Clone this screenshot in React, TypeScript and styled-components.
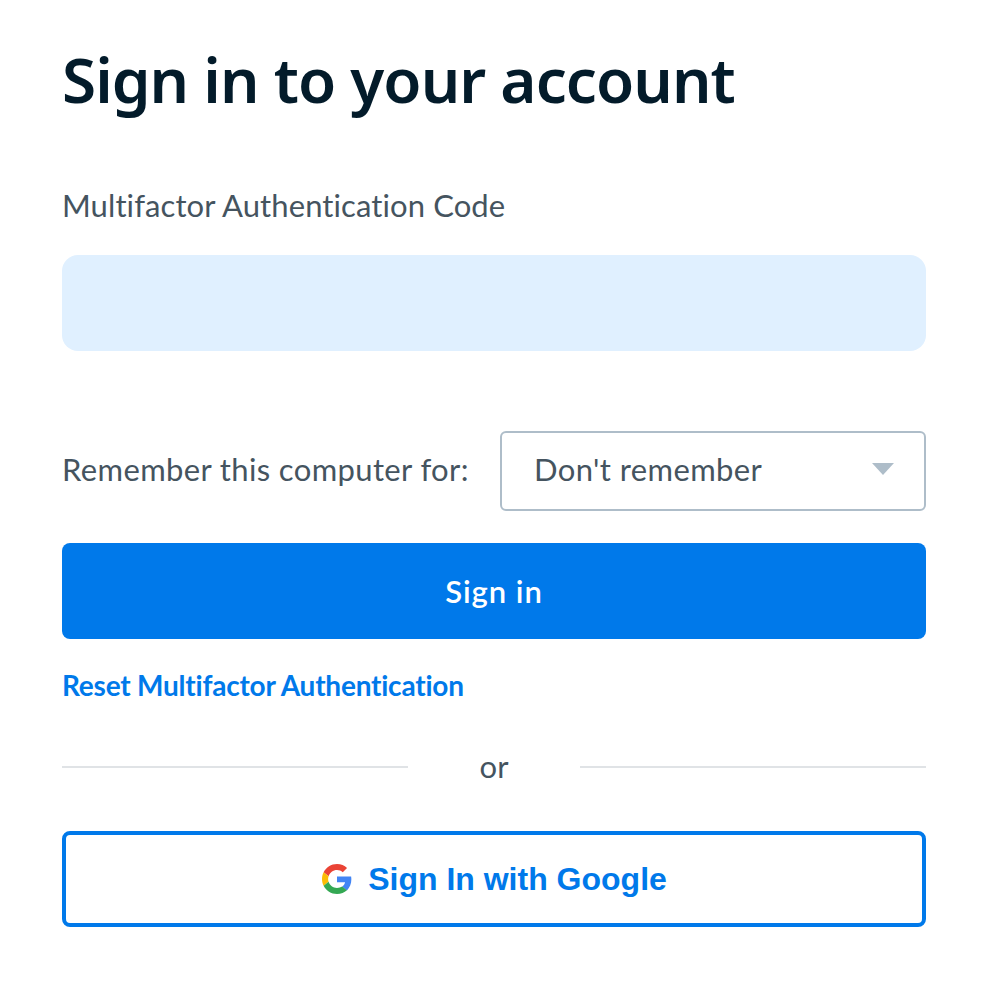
import React from 'react'
import styled, { createGlobalStyle } from 'styled-components'

const GlobalStyle = createGlobalStyle`
  html, body {
    margin: 0;
    padding: 0;
    background: #fff;
  }
`

const App = () => {
  return (
    <>
      <GlobalStyle />
      <Wrapper>
        <Title>Sign in to your account</Title>
        <Label htmlFor='mfa'>Multifactor Authentication Code</Label>
        <CodeInput id='mfa' />
        <RememberRow>
          <RememberLabel>Remember this computer for:</RememberLabel>
          <Select>
            <span>Don't remember</span>
            <Caret />
          </Select>
        </RememberRow>
        <SubmitButton>Sign in</SubmitButton>
        <ResetLink href='#'>Reset Multifactor Authentication</ResetLink>
        <Divider>
          <Line />
          <Or>or</Or>
          <Line />
        </Divider>
        <GoogleButton>
          <GoogleIcon />
          Sign In with Google
        </GoogleButton>
      </Wrapper>
    </>
  )
}

const GoogleIcon = () => (
  <GoogleSvg width='30' height='30' viewBox='0 0 48 48'>
    <path fill='#EA4335' d='M24 9.5c3.54 0 6.71 1.22 9.21 3.6l6.85-6.85C35.9 2.38 30.47 0 24 0 14.62 0 6.51 5.38 2.56 13.22l7.98 6.19C12.43 13.72 17.74 9.5 24 9.5z' />
    <path fill='#4285F4' d='M46.98 24.55c0-1.57-.15-3.09-.38-4.55H24v9.02h12.94c-.58 2.96-2.26 5.48-4.78 7.18l7.73 6c4.51-4.18 7.09-10.36 7.09-17.65z' />
    <path fill='#FBBC05' d='M10.53 28.59c-.48-1.45-.76-2.99-.76-4.59s.27-3.14.76-4.59l-7.98-6.19C.92 16.46 0 20.12 0 24c0 3.88.92 7.54 2.56 10.78l7.97-6.19z' />
    <path fill='#34A853' d='M24 48c6.48 0 11.93-2.13 15.89-5.81l-7.73-6c-2.15 1.45-4.92 2.3-8.16 2.3-6.26 0-11.57-4.22-13.47-9.91l-7.98 6.19C6.51 42.62 14.62 48 24 48z' />
  </GoogleSvg>
)

const GoogleSvg = styled.svg`
  margin-left: 1px;
`

const Wrapper = styled.div`
  width: 864px;
  padding: 39px 60px 0 62px;
  display: flex;
  flex-direction: column;
  font-family: 'Lato', 'Open Sans', sans-serif;
  color: #45545f;
`

const Title = styled.h1`
  margin: 0 0 66px;
  font-family: 'Noto Sans', 'Open Sans', sans-serif;
  font-size: 62px;
  line-height: 80px;
  font-weight: 600;
  letter-spacing: -0.96px;
  color: #031b2a;
`

const Label = styled.label`
  font-size: 31px;
  line-height: 40px;
  letter-spacing: 0.1px;
  margin-bottom: 30px;
`

const CodeInput = styled.input`
  display: block;
  box-sizing: border-box;
  width: 100%;
  height: 96px;
  border: 0;
  border-radius: 16px;
  background: #e0f0ff;
  margin-bottom: 80px;
  padding: 0;
`

const RememberRow = styled.div`
  display: flex;
  align-items: center;
  justify-content: space-between;
  margin-bottom: 32px;
`

const RememberLabel = styled.span`
  font-size: 31px;
  letter-spacing: 0.37px;
  padding-bottom: 4px;
`

const Select = styled.div`
  box-sizing: border-box;
  width: 426px;
  height: 80px;
  border: 2px solid #aebdc9;
  border-radius: 6px;
  padding: 0 30px 4px 32px;
  display: flex;
  align-items: center;
  justify-content: space-between;
  font-size: 31px;
  letter-spacing: 0.4px;
`

const Caret = styled.i`
  width: 0;
  height: 0;
  border-left: 11px solid transparent;
  border-right: 11px solid transparent;
  border-top: 12px solid #aebdc9;
`

const SubmitButton = styled.button`
  height: 96px;
  border: 0;
  border-radius: 8px;
  background: #0079ea;
  color: #fff;
  font-family: inherit;
  font-size: 31px;
  font-weight: 600;
  letter-spacing: 0.95px;
  margin-bottom: 27px;
`

const ResetLink = styled.a`
  font-size: 28px;
  line-height: 38px;
  font-weight: 700;
  font-variant-ligatures: none;
  letter-spacing: -0.22px;
  color: #0079ea;
  text-decoration: none;
  margin-bottom: 42px;
`

const Divider = styled.div`
  display: flex;
  align-items: center;
  margin-bottom: 43px;
`

const Line = styled.div`
  flex: 1;
  height: 2px;
  background: #e0e3e6;
`

const Or = styled.span`
  width: 172px;
  text-align: center;
  font-size: 31px;
  line-height: 40px;
  padding-bottom: 2px;
`

const GoogleButton = styled.button`
  box-sizing: border-box;
  height: 96px;
  border: 4px solid #0079ea;
  border-radius: 8px;
  background: #fff;
  color: #0079ea;
  font-family: 'Liberation Sans', Arial, sans-serif;
  font-size: 32px;
  font-weight: 700;
  display: flex;
  align-items: center;
  justify-content: center;
  gap: 16px;
`

export default App
